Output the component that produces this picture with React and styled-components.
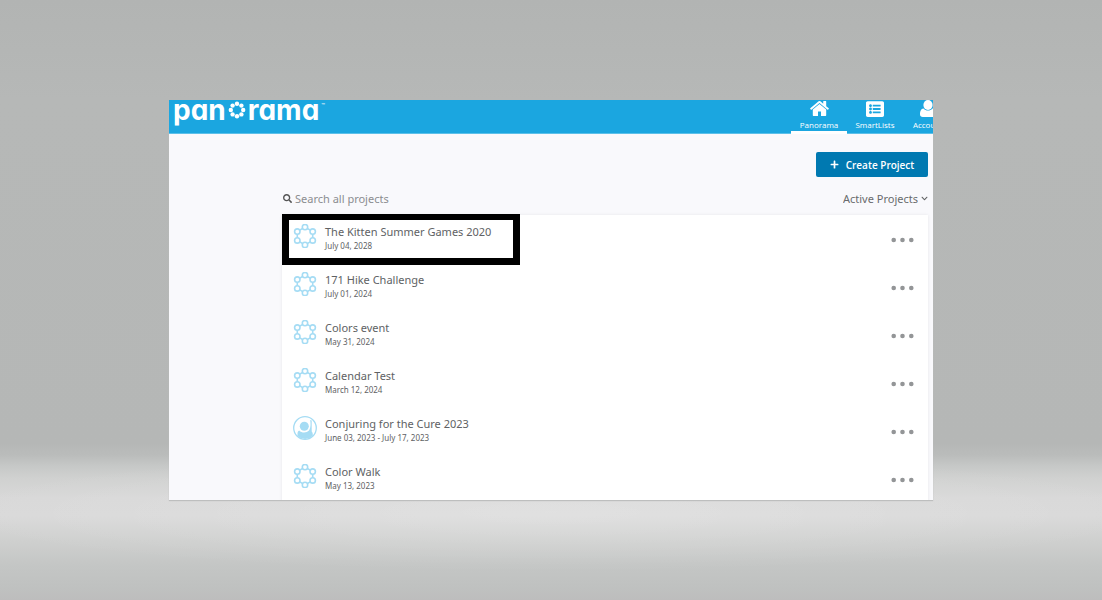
import React from 'react';
import styled, { createGlobalStyle } from 'styled-components';
import { FaListAlt, FaSearch, FaPlus, FaChevronDown } from 'react-icons/fa';

const GlobalStyle = createGlobalStyle`
  *, *::before, *::after { box-sizing: border-box; }
  body {
    margin: 0;
    font-family: "Noto Sans", "Open Sans", sans-serif;
    color: #606264;
  }
  button, input, select { font: inherit; color: inherit; }
`;

const Stage = styled.div`
  height: 100vh;
  padding: 100px 169px;
  background:
    radial-gradient(ellipse 620px 60px at 50% 512px, rgba(255, 255, 255, 0.2), rgba(255, 255, 255, 0)),
    linear-gradient(180deg, #b2b4b3 0, #b6b8b7 100px, #b5b7b6 443px, #babcbb 455px, #c6c8c7 466px, #d0d1d0 478px, #d8d8d8 498px,
      #d9d9d9 516px, #cfd0cf 540px, #c4c6c5 565px, #bfc1c0 588px, #bdbdbd 600px);
`;

const Frame = styled.div`
  height: 100%;
  overflow: hidden;
  background: #f9f9fc;
  box-shadow: 0 1px 1px #bdbebe;
`;

const Header = styled.header`
  height: 34px;
  display: flex;
  justify-content: space-between;
  overflow: hidden;
  background: linear-gradient(#1ba6e0 33px, #5cc0e9 33px);
`;

const Brand = styled.a`
  display: flex;
  align-items: center;
  gap: 2px;
  height: 20px;
  padding-left: 4px;
  font-family: Inter, "Open Sans", sans-serif;
  font-feature-settings: "cv11";
  font-size: 28px;
  font-weight: 700;
  line-height: 20px;
  color: #fff;
  text-decoration: none;
`;

const Trademark = styled.small`
  font-size: 6px;
  font-weight: 400;
  line-height: 8px;
  align-self: flex-start;
  padding-top: 2px;
`;

const Nav = styled.nav`
  display: flex;
  margin-right: -20px;
`;

const Tab = styled.a`
  width: ${(p) => (p.$narrow ? '50px' : '56px')};
  display: flex;
  flex-direction: column;
  align-items: center;
  gap: 3px;
  font-family: "Open Sans", sans-serif;
  font-size: 8px;
  line-height: 10px;
  color: #fff;
  text-decoration: none;
  border-bottom: 3px solid ${(p) => (p.$active ? '#fff' : 'transparent')};
`;

const TabIcon = styled.span`
  height: 17px;
  display: flex;
  align-items: center;
`;

const Content = styled.main`
  padding: 18px 5px 0 113px;
`;

const Actions = styled.div`
  display: flex;
  justify-content: flex-end;
`;

const CreateButton = styled.button`
  width: 112px;
  height: 25px;
  display: flex;
  align-items: center;
  justify-content: center;
  gap: 7px;
  padding: 0;
  border: 0;
  border-radius: 2px;
  background: #0079b1;
  color: #fff;
  font-family: "Open Sans", sans-serif;
  font-size: 10px;
  font-weight: 600;
`;

const Filters = styled.div`
  display: flex;
  align-items: center;
  justify-content: space-between;
  height: 38px;
  padding-top: 5px;
  font-size: 11px;
`;

const SearchField = styled.label`
  display: flex;
  align-items: center;
  gap: 3px;
  padding-left: 1px;
  color: #555;
`;

const SearchInput = styled.input`
  width: 200px;
  padding: 0;
  border: 0;
  outline: 0;
  background: transparent;
  &::placeholder { color: #8b8d90; opacity: 1; }
`;

const FilterField = styled.label`
  display: flex;
  align-items: center;
  gap: 3px;
`;

const FilterSelect = styled.select`
  appearance: none;
  padding: 0;
  border: 0;
  background: transparent;
  color: #696b6d;
`;

const ProjectList = styled.ul`
  margin: 0;
  padding: 0;
  list-style: none;
  background: #fff;
  box-shadow: 0 0 3px rgba(0, 0, 0, 0.08);
`;

const ProjectRow = styled.li`
  position: relative;
  display: flex;
  align-items: flex-start;
  height: 48px;
  padding: 9px 14px 0 11px;
`;

const Details = styled.div`
  flex: 1;
  padding-left: 8px;
`;

const Title = styled.a`
  display: block;
  font-size: 11px;
  line-height: 16px;
  color: inherit;
  text-decoration: none;
`;

const Dates = styled.div`
  font-size: 8px;
  line-height: 11px;
`;

const MoreButton = styled.button`
  height: 32px;
  display: flex;
  align-items: center;
  padding: 0;
  border: 0;
  background: transparent;
`;

const Highlight = styled.div`
  position: absolute;
  top: -1px;
  left: 0;
  width: 238px;
  height: 51px;
  border: 7px solid #000;
  border-top-width: 6px;
  pointer-events: none;
`;

const ring = (count, center, radius, start) =>
  Array.from({ length: count }, (_, i) => {
    const a = ((Math.PI * 2) / count) * i + start;
    return [center + radius * Math.cos(a), center + radius * Math.sin(a)];
  });

function BrandRing() {
  return (
    <svg width="18" height="18" viewBox="0 0 18 18" fill="#fff" aria-hidden="true">
      {ring(8, 9, 6.2, Math.PI / 2).map(([x, y], i) => <circle key={i} cx={x} cy={y} r="2.2" />)}
    </svg>
  );
}

function HomeIcon() {
  return (
    <svg width="19" height="15" viewBox="90 250 1612 1290" fill="currentColor" aria-hidden="true">
      <path d="M1472 992v480q0 26-19 45t-45 19h-384v-384h-256v384h-384q-26 0-45-19t-19-45v-480q0-1 .5-3t.5-3l575-474 575 474q1 2 1 6zm223-69l-62 74q-8 9-21 11h-3q-13 0-21-7l-692-577-692 577q-12 8-24 7-13-2-21-11l-62-74q-8-10-7-23.500t11-21.500l719-599q32-26 76-26t76 26l244 204v-195q0-14 9-23t23-9h192q14 0 23 9t9 23v408l219 182q10 8 11 21.500t-7 23.500z" />
    </svg>
  );
}

function AccountIcon() {
  return (
    <svg width="18" height="17" viewBox="0 0 18 17" fill="currentColor" aria-hidden="true">
      <ellipse cx="9" cy="5" rx="4.600" ry="5" />
      <path d="M4.500 8.500C1.800 8.700 1 11.500 1 14.200C1 16 2 17 3.800 17H14.200C16 17 17 16 17 14.200C17 11.500 16.200 8.700 13.500 8.500C11 11.300 7 11.300 4.500 8.500Z" />
    </svg>
  );
}

function EventIcon() {
  const nodes = ring(6, 12, 8.9, -Math.PI / 2);
  return (
    <svg width="24" height="24" viewBox="0 0 24 24" fill="#fff" stroke="#a5dcf4" strokeWidth="1.6" aria-hidden="true">
      <polygon points={nodes.map((n) => n.join(',')).join(' ')} />
      {nodes.map(([x, y], i) => <circle key={i} cx={x} cy={y} r="2.7" />)}
    </svg>
  );
}

function PersonIcon() {
  return (
    <svg width="24" height="24" viewBox="0 0 24 24" aria-hidden="true">
      <circle cx="12" cy="12" r="11.3" fill="#fff" stroke="#a5dcf4" strokeWidth="1.3" />
      <path d="M4.500 20V17.500C4.600 15.800 5.200 14.800 6.200 14.400C8.500 17 13.500 17.200 16 14.500C17.900 12 17.700 7 17.200 4L18.700 4.500V15.500C19.700 16.500 19.900 18 19.800 19.800A11 11 0 0 1 4.500 20Z" fill="#a5dcf4" />
      <circle cx="11.300" cy="10.300" r="4.500" fill="#a5dcf4" />
    </svg>
  );
}

function MoreIcon() {
  return (
    <svg width="23" height="6" viewBox="0 0 23 6" fill="#939597" aria-hidden="true">
      <circle cx="2.700" cy="3" r="2.300" />
      <circle cx="11.500" cy="3" r="2.300" />
      <circle cx="20.300" cy="3" r="2.300" />
    </svg>
  );
}

const projects = [
  { title: 'The Kitten Summer Games 2020', dates: 'July 04, 2028', highlighted: true },
  { title: '171 Hike Challenge', dates: 'July 01, 2024' },
  { title: 'Colors event', dates: 'May 31, 2024' },
  { title: 'Calendar Test', dates: 'March 12, 2024' },
  { title: 'Conjuring for the Cure 2023', dates: 'June 03, 2023 - July 17, 2023', person: true },
  { title: 'Color Walk', dates: 'May 13, 2023' },
];

export default function App() {
  return (
    <>
      <GlobalStyle />
      <Stage>
        <Frame>
          <Header>
            <Brand href="#">
              <span>pan</span>
              <BrandRing />
              <span>rama</span>
              <Trademark>™</Trademark>
            </Brand>
            <Nav>
              <Tab href="#" $active><TabIcon><HomeIcon /></TabIcon>Panorama</Tab>
              <Tab href="#"><TabIcon><FaListAlt size={18} /></TabIcon>SmartLists</Tab>
              <Tab href="#" $narrow><TabIcon><AccountIcon /></TabIcon>Account</Tab>
            </Nav>
          </Header>
          <Content>
            <Actions>
              <CreateButton type="button"><FaPlus size={9} />Create Project</CreateButton>
            </Actions>
            <Filters>
              <SearchField>
                <FaSearch size={9} />
                <SearchInput type="text" placeholder="Search all projects" aria-label="Search all projects" />
              </SearchField>
              <FilterField>
                <FilterSelect aria-label="Project status">
                  <option>Active Projects</option>
                </FilterSelect>
                <FaChevronDown size={7} />
              </FilterField>
            </Filters>
            <ProjectList>
              {projects.map((p) => (
                <ProjectRow key={p.title}>
                  {p.person ? <PersonIcon /> : <EventIcon />}
                  <Details>
                    <Title href="#">{p.title}</Title>
                    <Dates>{p.dates}</Dates>
                  </Details>
                  <MoreButton type="button" aria-label={`More options for ${p.title}`}>
                    <MoreIcon />
                  </MoreButton>
                  {p.highlighted && <Highlight />}
                </ProjectRow>
              ))}
            </ProjectList>
          </Content>
        </Frame>
      </Stage>
    </>
  );
}
